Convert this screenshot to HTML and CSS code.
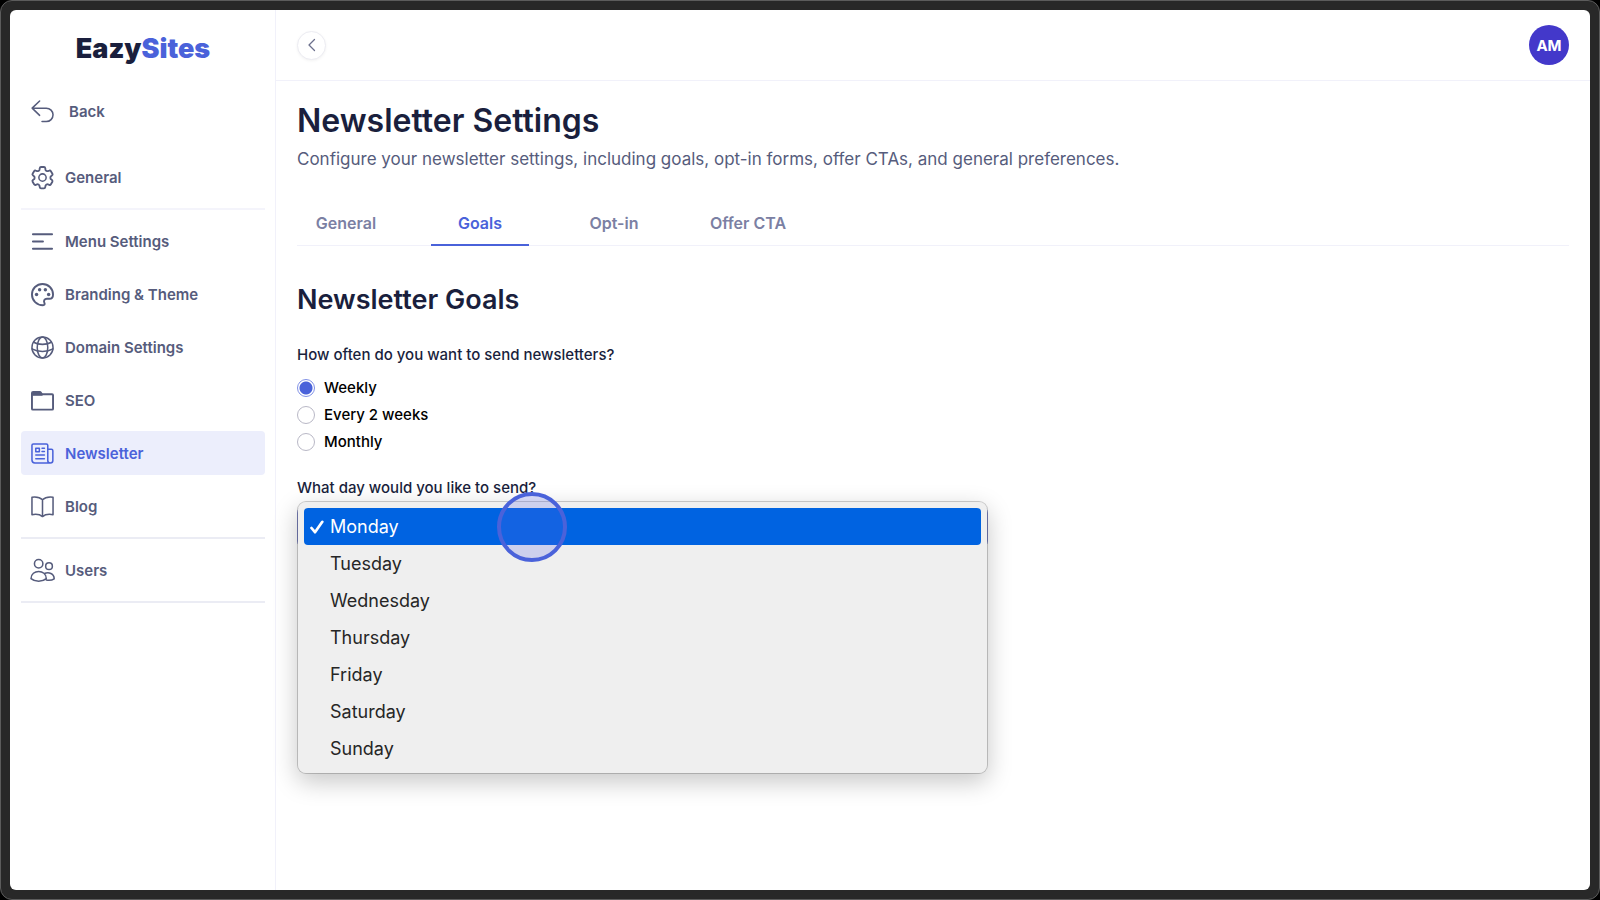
FILE: index.html
```html
<!DOCTYPE html>
<html lang="en">
<head>
<meta charset="utf-8">
<title>EazySites – Newsletter Settings</title>
<link rel="stylesheet" href="styles.css">
</head>
<body>
<div class="window">
  <div class="app">
    <aside class="sidebar">
      <a class="logo" href="#">Eazy<span class="logo-accent">Sites</span></a>
      <nav class="nav" aria-label="Settings">
        <a class="nav-item nav-back" href="#">
          <svg class="icon" viewBox="0 0 24 24"><path d="M9 1 1.200 8.500 9 16M1.200 8.500H16a7 7 0 0 1 0 14h-4.500"/></svg>
          Back
        </a>
        <a class="nav-item" href="#">
          <svg class="icon" viewBox="0 0 24 24"><path d="M9.600 3.900c.1-.6.600-1 1.100-1h2.600c.5 0 1 .4 1.100 1l.2 1.300c.1.400.3.700.6.900l.4.200c.3.200.7.300 1.100.1l1.200-.4c.5-.2 1.100 0 1.400.5l1.300 2.200c.3.500.2 1.100-.3 1.400l-1 .9c-.3.200-.4.600-.4 1v.4c0 .4.100.8.400 1l1 .8c.4.400.5 1 .3 1.500l-1.300 2.200c-.3.500-.9.700-1.400.5l-1.200-.5c-.4-.1-.8-.1-1.100.1l-.4.300c-.3.200-.5.500-.6.900l-.2 1.200c-.1.600-.6 1-1.100 1h-2.600c-.6 0-1-.4-1.100-1l-.2-1.200c-.1-.4-.3-.7-.6-.9l-.4-.3c-.3-.2-.7-.2-1.100-.1l-1.200.5c-.5.200-1.100 0-1.400-.5l-1.300-2.200c-.3-.5-.2-1.100.3-1.500l1-.8c.3-.2.400-.6.400-1v-.4c0-.4-.1-.8-.4-1l-1-.9c-.4-.3-.6-.9-.3-1.400l1.300-2.200c.3-.5.900-.7 1.400-.5l1.200.4c.4.200.8.100 1.100-.1l.4-.2c.3-.2.500-.5.600-.9z" transform="translate(-2.400 -2.400) scale(1.200)"/><circle cx="12" cy="12" r="3.800"/></svg>
          General
        </a>
        <hr class="divider">
        <a class="nav-item" href="#">
          <svg class="icon icon-bold" viewBox="0 0 24 24"><path d="M2 4.500h20M2 12h10.500M2 19.500h20"/></svg>
          Menu Settings
        </a>
        <a class="nav-item" href="#">
          <svg class="icon icon-bold" viewBox="0 0 24 24"><path d="M12 1C5.800 1 1 5.900 1 12c0 6.200 5 11.200 11.500 11.200 1.700 0 2.100-1.100 1.500-2.300-1.200-2.500.2-4.400 2.500-4.400h2.700c2.400 0 3.800-1.700 3.800-4.500C23 5.700 18 1 12 1z"/><g class="solid"><circle cx="5.800" cy="12" r="1.800"/><circle cx="9" cy="7" r="1.800"/><circle cx="15" cy="7" r="1.800"/><circle cx="18.400" cy="12" r="1.800"/></g></svg>
          Branding &amp; Theme
        </a>
        <a class="nav-item" href="#">
          <svg class="icon" viewBox="0 0 24 24"><circle cx="12" cy="12" r="11"/><ellipse cx="12" cy="12" rx="5.500" ry="11"/><path d="M2.800 6.500c5 3 13.400 3 18.400 0M1 13.500c6 3.500 16 3.500 22 0"/></svg>
          Domain Settings
        </a>
        <a class="nav-item" href="#">
          <svg class="icon icon-bold" viewBox="0 0 24 24"><rect x="1" y="5.500" width="22" height="16" rx="1"/><path class="solid outlined" d="M1 6V4.200Q1 3 2.200 3H9q1 0 1.500 1l1 2z"/></svg>
          SEO
        </a>
        <a class="nav-item is-active" href="#" aria-current="page">
          <svg class="icon" viewBox="0 0 24 24"><path d="M17.500 21.800H4a3 3 0 0 1-3-3V3.500A1.500 1.500 0 0 1 2.500 2H16a1.500 1.500 0 0 1 1.500 1.500v15.700a2.600 2.600 0 0 0 5.300 0V9A1.500 1.500 0 0 0 21.300 7.500h-3.800M17.500 21.800h2.700M5 13.500h9M5 17.500h9M11.500 6.500H14M11.500 10H14"/><rect x="5" y="6.500" width="3.700" height="3.700"/></svg>
          Newsletter
        </a>
        <a class="nav-item" href="#">
          <svg class="icon" viewBox="0 0 24 24"><path d="M12 5C9 2 5 1.800 1 2.300v18.200c4-.7 8-.6 11 2 3-2.600 7-2.700 11-2V2.300C19 1.800 15 2 12 5zM12 5v17.500"/></svg>
          Blog
        </a>
        <hr class="divider divider-dark">
        <a class="nav-item" href="#">
          <svg class="icon" viewBox="0 0 24 24"><circle cx="8" cy="5" r="4.400"/><circle cx="18.800" cy="7.500" r="3.500"/><path d="M0 20.500C0 15.500 4 13 8 13s8 2.500 8 7.500c-4 3.500-12 3.500-16 0zM14 15.200c4.500-2 10.200 0 10.200 5.600-2.200 1.400-5.200 1.700-8.200 1.200"/></svg>
          Users
        </a>
        <hr class="divider divider-dark">
      </nav>
    </aside>

    <div class="page">
      <header class="topbar">
        <button class="collapse" type="button" aria-label="Collapse sidebar">
          <svg class="chevron" viewBox="0 0 14 14"><path d="M9.500 1.500 4 7l5.500 5.500"/></svg>
        </button>
        <button class="avatar" type="button">AM</button>
      </header>

      <main class="content">
        <h1 class="title">Newsletter Settings</h1>
        <p class="subtitle">Configure your newsletter settings, including goals, opt-in forms, offer CTAs, and general preferences.</p>

        <div class="tabs" role="tablist">
          <button class="tab" type="button" role="tab">General</button>
          <button class="tab is-active" type="button" role="tab" aria-selected="true">Goals</button>
          <button class="tab" type="button" role="tab">Opt-in</button>
          <button class="tab" type="button" role="tab">Offer CTA</button>
        </div>

        <h2 class="section-title">Newsletter Goals</h2>

        <form class="form">
          <fieldset class="group">
            <legend class="label">How often do you want to send newsletters?</legend>
            <label class="choice"><input class="radio" type="radio" name="frequency" checked>Weekly</label>
            <label class="choice"><input class="radio" type="radio" name="frequency">Every 2 weeks</label>
            <label class="choice"><input class="radio" type="radio" name="frequency">Monthly</label>
          </fieldset>

          <div class="group">
            <label class="label" for="day">What day would you like to send?</label>
            <div class="picker">
              <select class="field" id="day">
                <option>Monday</option><option>Tuesday</option><option>Wednesday</option><option>Thursday</option><option>Friday</option><option>Saturday</option><option>Sunday</option>
              </select>
              <ul class="menu" role="listbox" aria-label="Day">
                <li class="option is-selected" role="option" aria-selected="true"><svg class="check" viewBox="0 0 14 14"><path d="M1.500 8 5 12.200 12.300 1.800"/></svg>Monday</li>
                <li class="option" role="option">Tuesday</li>
                <li class="option" role="option">Wednesday</li>
                <li class="option" role="option">Thursday</li>
                <li class="option" role="option">Friday</li>
                <li class="option" role="option">Saturday</li>
                <li class="option" role="option">Sunday</li>
              </ul>
              <span class="pointer"></span>
            </div>
          </div>
        </form>
      </main>
    </div>
  </div>
</div>
</body>
</html>
```
FILE: styles.css
```css
:root {
  --ink: #1a1f3d;
  --muted: #565c7c;
  --soft: #7b80a3;
  --brand: #4a62da;
  --line: #f1f1fa;
}

* { box-sizing: border-box; }

body {
  margin: 0;
  background: #000;
  color: var(--ink);
  font-family: Inter, "Liberation Sans", sans-serif;
  font-size: 16px;
}

button { font: inherit; cursor: pointer; }
a { color: inherit; text-decoration: none; }

.window {
  display: flex;
  min-height: 100vh;
  padding: 9px;
  border: 1px solid #5c5c5c;
  border-radius: 12px;
  background: #282828;
}

.app {
  display: flex;
  flex: 1;
  border-radius: 6px;
  background: #fff;
  overflow: hidden;
}

/* Sidebar */
.sidebar {
  flex: none;
  width: 266px;
  padding: 21px 10px 20px 11px;
  border-right: 1px solid var(--line);
}

.logo {
  display: block;
  color: var(--ink);
  font-size: 27px;
  font-weight: 900;
  line-height: 36px;
  text-align: center;
}

.logo-accent { color: var(--brand); }

.nav {
  display: flex;
  flex-direction: column;
  gap: 9px;
  margin-top: 22px;
}

.nav-item {
  display: flex;
  align-items: center;
  gap: 11px;
  height: 44px;
  padding: 0 10px;
  border-radius: 4px;
  color: var(--muted);
  font-size: 15px;
  font-weight: 600;
}

.nav-back { gap: 15px; margin-bottom: 13px; }

.nav-item.is-active { background: #eceefc; color: var(--brand); }

.icon {
  flex: none;
  width: 23px;
  height: 23px;
  fill: none;
  stroke: currentColor;
  stroke-width: 1.6;
  stroke-linecap: round;
  stroke-linejoin: round;
  overflow: visible;
}

.icon-bold { stroke-width: 2; }
.solid { fill: currentColor; stroke: none; }
.outlined { stroke: currentColor; }

.divider {
  width: 100%;
  height: 2px;
  margin: 0;
  border: 0;
  background: #f4f4fb;
}

.divider-dark { background: #ebecf4; }

/* Page */
.page { flex: 1; min-width: 0; }

.topbar {
  display: flex;
  align-items: center;
  justify-content: space-between;
  height: 71px;
  padding: 0 21px;
  border-bottom: 1px solid var(--line);
}

.collapse {
  display: grid;
  place-items: center;
  width: 29px;
  height: 29px;
  padding: 0;
  border: 1px solid #ececf2;
  border-radius: 50%;
  background: #fff;
  box-shadow: 0 1px 3px #0000000d;
}

.chevron {
  width: 14px;
  height: 14px;
  fill: none;
  stroke: #6b6f8c;
  stroke-width: 1.3;
  stroke-linecap: round;
  stroke-linejoin: round;
}

.avatar {
  width: 40px;
  height: 40px;
  padding: 0;
  border: 0;
  border-radius: 50%;
  background: #4338ca;
  color: #fff;
  font-size: 15px;
  font-weight: 700;
}

.content { padding: 20px 21px; }

.title {
  margin: 0;
  font-size: 32px;
  font-weight: 600;
  line-height: 40px;
}

.subtitle {
  margin: 4px 0 0;
  color: var(--muted);
  font-size: 17px;
  line-height: 28px;
}

.tabs {
  display: flex;
  gap: 36px;
  margin-top: 29px;
  border-bottom: 1px solid var(--line);
}

.tab {
  min-width: 98px;
  height: 44px;
  margin-bottom: -1px;
  padding: 0 8px;
  border: 0;
  border-bottom: 2px solid transparent;
  background: none;
  color: var(--soft);
  font-size: 16px;
  font-weight: 600;
}

.tab.is-active { border-color: var(--brand); color: var(--brand); }

.section-title {
  margin: 36px 0 0;
  font-size: 27px;
  font-weight: 600;
  line-height: 36px;
}

/* Form */
.form { width: 691px; max-width: 100%; margin-top: 25px; }

.group { margin: 0 0 21px; padding: 0; border: 0; }

.label {
  display: block;
  padding: 0;
  font-size: 15px;
  font-weight: 500;
  line-height: 24px;
}

legend.label { margin-bottom: 7px; }

.choice {
  display: flex;
  align-items: center;
  gap: 9px;
  height: 27px;
  color: #000;
  font-size: 15px;
  font-weight: 500;
}

.radio {
  appearance: none;
  width: 18px;
  height: 18px;
  margin: 0;
  border: 1px solid #b9b8c6;
  border-radius: 50%;
  background: #fff;
}

.radio:checked {
  border-color: #8191e6;
  background: radial-gradient(circle, var(--brand) 6px, #fff 7px);
}

.picker { position: relative; padding-top: 5px; }

.field {
  display: block;
  width: 100%;
  height: 44px;
  padding: 0 12px;
  border: 1px solid #8b93d6;
  border-radius: 8px;
  background: #fff;
  color: var(--ink);
  font: inherit;
}

.menu {
  position: absolute;
  top: 1px;
  left: 0;
  right: 0;
  margin: 0;
  padding: 6px;
  border: 1px solid #00000030;
  border-radius: 9px;
  background: #efefef;
  background-clip: padding-box;
  box-shadow: 0 8px 24px #00000038;
  list-style: none;
}

.option {
  display: flex;
  align-items: center;
  height: 37px;
  padding-left: 26px;
  border-radius: 4px;
  color: #262626;
  font-size: 18px;
}

.option.is-selected { gap: 6px; padding-left: 6px; background: #0063e1; color: #fff; }

.check {
  width: 14px;
  height: 14px;
  fill: none;
  stroke: #fff;
  stroke-width: 2.7;
  stroke-linecap: round;
  stroke-linejoin: round;
}

.pointer {
  position: absolute;
  top: -8px;
  left: 200px;
  width: 70px;
  height: 70px;
  border: 4px solid var(--brand);
  border-radius: 50%;
  background: #5666e638;
}
```
